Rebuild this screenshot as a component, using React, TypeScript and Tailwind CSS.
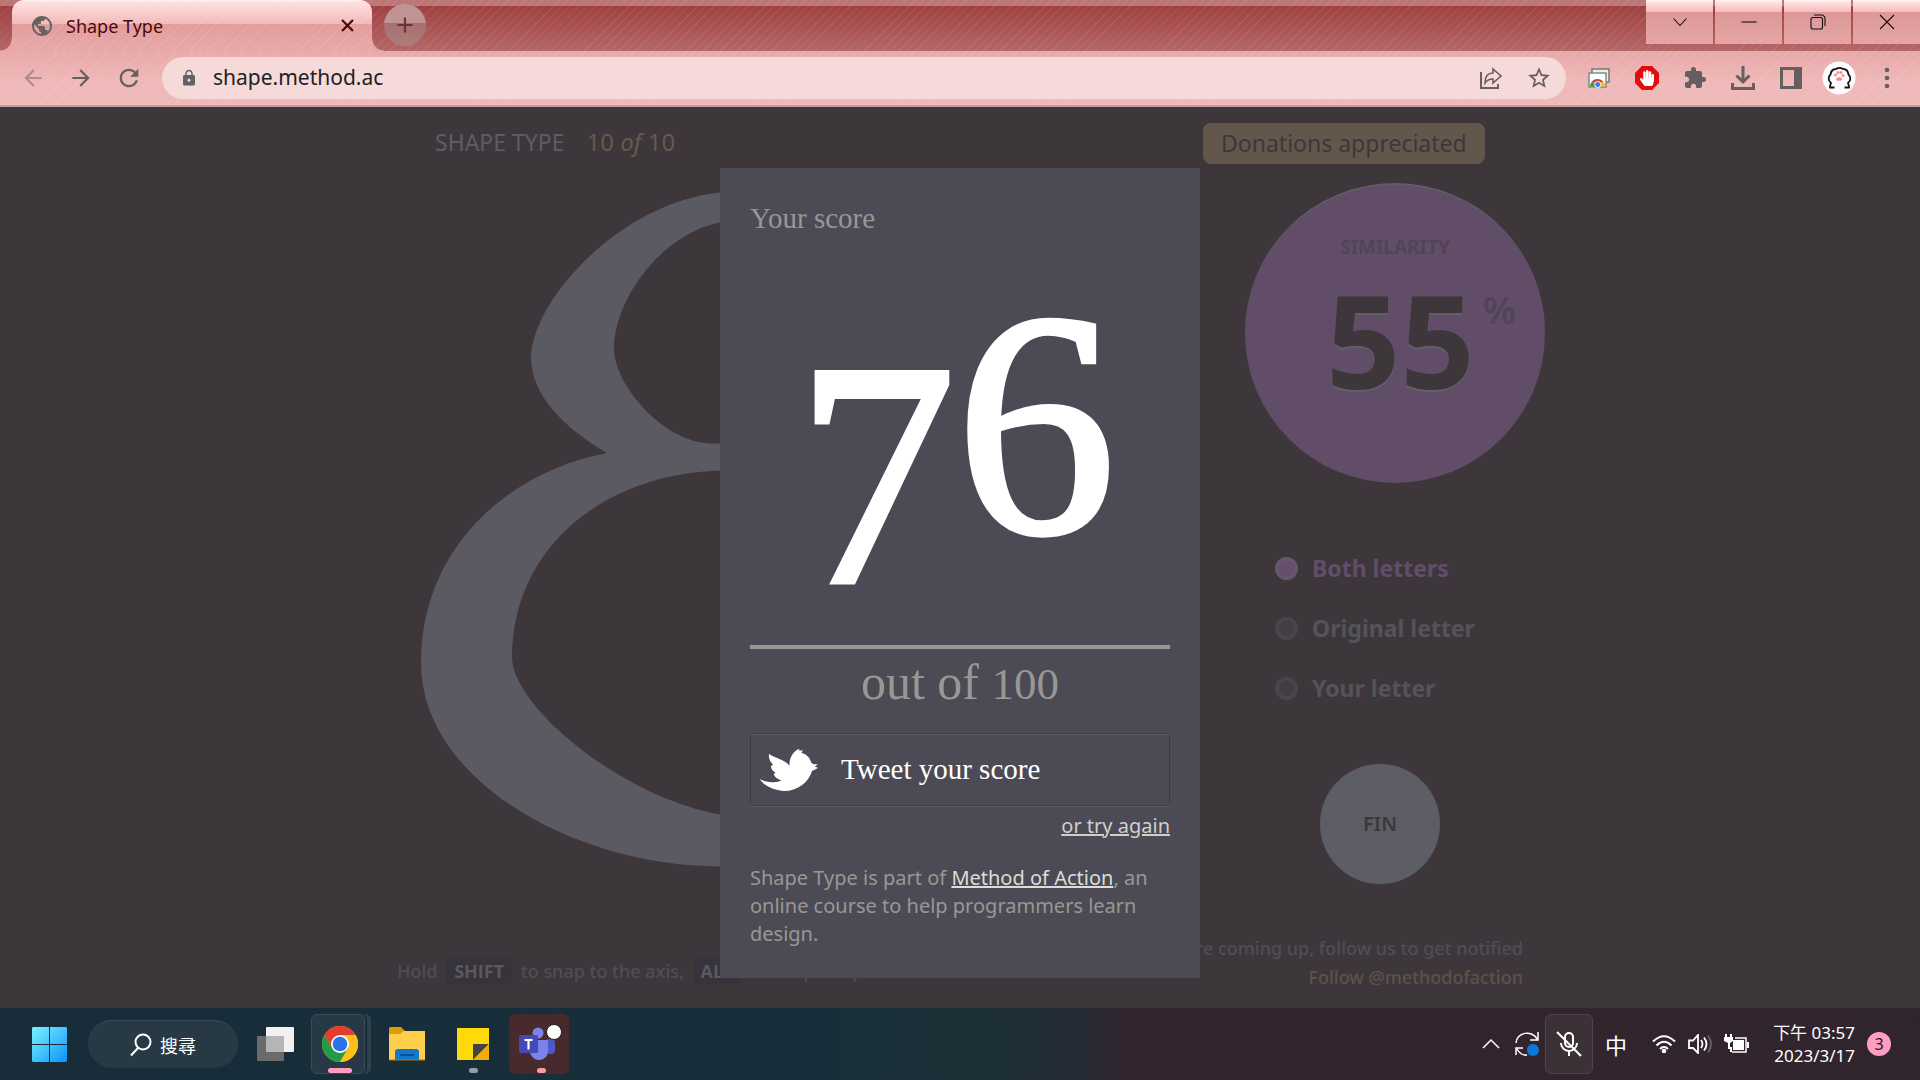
import React from "react";
import {
  MdArrowBack,
  MdArrowForward,
  MdRefresh,
  MdLock,
  MdPublic,
  MdExtension,
  MdStarBorder,
  MdAdd,
} from "react-icons/md";
import { FaHandPaper } from "react-icons/fa";

const stripes =
  "bg-[repeating-linear-gradient(135deg,transparent_0_5px,rgba(255,255,255,0.08)_5px_6px)]";

function WindowButton({ label, children }: { label: string; children: React.ReactNode }) {
  return (
    <button
      aria-label={label}
      className="flex h-11 w-[67px] items-center justify-center bg-[linear-gradient(#fff5f5_0,#ffdede_3px,#f4bcbc_12px,#dd9797_12px,#e6a5a5_100%)]"
    >
      <svg width="16" height="16" viewBox="0 0 16 16" fill="none" stroke="#111" strokeWidth="1.1">
        {children}
      </svg>
    </button>
  );
}

function TabStrip() {
  return (
    <div className="relative flex h-[51px] bg-[linear-gradient(#bd7676_0_6px,#9f4141_6px,#b56767_100%)]">
      <div className={`pointer-events-none absolute inset-0 ${stripes}`} />
      <div className="relative flex w-3 flex-col">
        <div className="mt-auto h-3 w-3 bg-[radial-gradient(circle_at_0_0,transparent_11px,#e6a7a7_12px)]" />
      </div>
      <div className="relative flex w-[360px] items-center rounded-t-xl bg-[linear-gradient(#fff0f0_0,#ffdede_3px,#f2b9b9_24px,#e29c9c_24px,#e8a9a9_100%)] pl-[18px] pr-[18px]">
        <div className={`pointer-events-none absolute inset-0 rounded-t-xl ${stripes}`} />
        <MdPublic className="size-6 text-[#66605f]" />
        <span className="ml-3 flex-1 text-lg text-[#4b0505]">Shape Type</span>
        <button aria-label="Close tab" className="text-[#4b0505]">
          <svg width="13" height="13" viewBox="0 0 13 13" fill="none" stroke="currentColor" strokeWidth="2.200">
            <path d="m1 1 11 11M12 1 1 12" />
          </svg>
        </button>
      </div>
      <div className="relative flex w-3 flex-col">
        <div className="mt-auto h-3 w-3 bg-[radial-gradient(circle_at_100%_0,transparent_11px,#e6a7a7_12px)]" />
      </div>
      <button
        aria-label="New tab"
        className="relative mt-1 flex size-[42px] items-center justify-center rounded-full bg-[linear-gradient(#bf9492_0_45%,#a96f6f_45%,#ac7d7b_100%)] text-[#6a3535]"
      >
        <MdAdd className="size-[26px]" />
      </button>
      <div className="relative ml-auto flex gap-0.5">
        <WindowButton label="Search tabs">
          <path d="M1.500 4.500 8 11.500l6.500-7" />
        </WindowButton>
        <WindowButton label="Minimize">
          <path d="M.5 8h15" />
        </WindowButton>
        <WindowButton label="Restore">
          <rect x="1" y="3.500" width="11.500" height="11.500" rx="2" />
          <path d="M4 1h7.500a3.500 3.500 0 0 1 3.500 3.500V12" />
        </WindowButton>
        <WindowButton label="Close">
          <path d="m1 1 14 14M15 1 1 15" />
        </WindowButton>
      </div>
    </div>
  );
}

function ToolButton({ label, children }: { label: string; children: React.ReactNode }) {
  return (
    <button aria-label={label} className="flex h-10 w-12 items-center justify-center text-[#665f5f]">
      {children}
    </button>
  );
}

function Toolbar() {
  return (
    <div className="relative flex h-14 items-center border-b-2 border-[#c79c9c] bg-[linear-gradient(#e8a9a9,#f0b9b9_60%)] px-[9px]">
      <div className={`pointer-events-none absolute inset-0 ${stripes}`} />
      <div className="relative flex w-full items-center">
        <ToolButton label="Back">
          <MdArrowBack className="size-[26px] text-[#b38a8a]" />
        </ToolButton>
        <ToolButton label="Forward">
          <MdArrowForward className="size-[26px]" />
        </ToolButton>
        <ToolButton label="Reload">
          <MdRefresh className="size-7" />
        </ToolButton>
        <div className="mx-[9px] flex h-[42px] flex-1 items-center rounded-full bg-[#f6dada] pl-[18px] pr-[3px]">
          <MdLock className="size-[18px] text-[#5f6368]" />
          <input
            aria-label="Address"
            defaultValue="shape.method.ac"
            className="ml-[15px] flex-1 bg-transparent text-[21px] text-[#202124] outline-none"
          />
          <ToolButton label="Share">
            <svg width="24" height="24" viewBox="0 0 24 24" fill="none" stroke="currentColor" strokeWidth="2">
              <path d="M2 6v16h17v-4" />
              <path d="M6 17c0-7 3-10 8-10V3l8 7-8 7v-4c-4 0-6 1-8 4z" strokeWidth="1.600" />
            </svg>
          </ToolButton>
          <ToolButton label="Bookmark">
            <MdStarBorder className="size-[26px]" />
          </ToolButton>
        </div>
        <ToolButton label="Tab cards">
          <svg width="24" height="24" viewBox="0 0 24 24">
            <rect x="5" y="3" width="17" height="13" fill="#eee" stroke="#777" strokeWidth="1.500" />
            <rect x="2" y="7" width="17" height="14" fill="#fff" stroke="#888" strokeWidth="1.500" />
            <path d="M3 20.500a7.500 7.500 0 0 1 2-5l6 5z" fill="#2aa14b" />
            <path d="M4.500 16a7.500 7.500 0 0 1 12 0l-6 1.500z" fill="#e2382c" />
            <path d="M16.500 15.500a8 8 0 0 1 1.700 5H11l-.5-3z" fill="#fbc21b" />
            <circle cx="10.700" cy="18.500" r="3" fill="#2e7cf0" stroke="#fff" />
          </svg>
        </ToolButton>
        <ToolButton label="Ad blocker">
          <span className="flex size-6 items-center justify-center bg-[#e30b0b] [clip-path:polygon(29%_0,71%_0,100%_29%,100%_71%,71%_100%,29%_100%,0_71%,0_29%)]">
            <FaHandPaper className="size-4 text-white" />
          </span>
        </ToolButton>
        <ToolButton label="Extensions">
          <MdExtension className="size-6" />
        </ToolButton>
        <ToolButton label="Downloads">
          <svg width="24" height="24" viewBox="0 0 24 24" fill="none" stroke="currentColor" strokeWidth="3">
            <path d="M12 0v15M5.500 9.500 12 16l6.500-6.500M1.500 17v5.500h21V17" />
          </svg>
        </ToolButton>
        <ToolButton label="Side panel">
          <svg width="22" height="22" viewBox="0 0 22 22" fill="none" stroke="currentColor" strokeWidth="3">
            <path d="M1.500 1.500h19v19h-19z" />
            <path d="M14 1h7v20h-7z" fill="currentColor" stroke="none" />
          </svg>
        </ToolButton>
        <ToolButton label="Profile">
          <svg width="34" height="34" viewBox="0 0 34 34">
            <circle cx="17" cy="17" r="16.500" fill="#fdfbfb" />
            <path
              d="M12.500 26.500H8c-.5-2 .8-3 1-4.500-3-2.500-3-6-.5-8.500.5-3.500 2.500-5.500 5.500-5.500 2-1.300 5-1.300 7 0 3 0 5 2 5.500 5.500 2.500 2.500 2.500 6-.5 8.500.2 1.500 1.500 2.500 1 4.500H22.500"
              fill="none"
              stroke="#151515"
              strokeWidth="1.800"
            />
            <g fill="#f29090">
              <circle cx="13.500" cy="14" r="1.500" />
              <circle cx="16" cy="11.500" r="1.500" />
              <circle cx="19" cy="11.500" r="1.500" />
              <circle cx="21" cy="14.500" r="1.500" />
              <path d="M14 19c0-2 2-3 3.200-3s3 1 3 3c-1 1-5.200 1-6.200 0z" />
            </g>
          </svg>
        </ToolButton>
        <ToolButton label="Menu">
          <svg width="6" height="22" viewBox="0 0 6 22" fill="currentColor">
            <circle cx="3" cy="3" r="2.300" />
            <circle cx="3" cy="11" r="2.300" />
            <circle cx="3" cy="19" r="2.300" />
          </svg>
        </ToolButton>
      </div>
    </div>
  );
}

function Key({ children }: { children: React.ReactNode }) {
  return (
    <kbd className="mx-1 rounded-md bg-[#36333a] px-2 py-0.5 font-['Open_Sans',sans-serif] font-bold text-[#5a5860]">
      {children}
    </kbd>
  );
}

function LetterOption({ label, checked = false }: { label: string; checked?: boolean }) {
  return (
    <label
      className={
        checked
          ? "flex h-[60px] items-center gap-[14px] text-[#624d6b]"
          : "flex h-[60px] items-center gap-[14px] text-[#55535a]"
      }
    >
      <input
        type="radio"
        name="letter"
        defaultChecked={checked}
        className="size-[23px] appearance-none rounded-full border-4 border-[#48464b] bg-[#433d43] checked:border-[#65566f] checked:bg-[#654d6b]"
      />
      {label}
    </label>
  );
}

function Stage() {
  return (
    <div className="mx-auto flex w-full max-w-[1126px] flex-1 flex-col pb-4 pt-4">
      <div className="flex flex-1 justify-between">
        <div>
          <header className="flex h-10 items-center gap-[22px] pb-0.5 pl-[38px] text-[23px]">
            <h1 className="text-[#5c5c66]">SHAPE TYPE</h1>
            <span className="text-2xl text-[#665a4b]">
              10 <em>of</em> 10
            </span>
          </header>
          <svg
            className="ml-6 mt-[29px]"
            width="360"
            height="675"
            viewBox="421 191.500 360 675"
            fill="#5b5961"
            fillRule="evenodd"
            aria-label="Numeral eight"
          >
            <path d="M781 197Q750 192 720 192C620 202 532 300 531 357C531 395 565 428 607 452.500C505 472 421 550 421 662C421 780 575 866 720 866H781V816Q750 820 720 814C620 796 512 705 512 657C512 550 600 474 720 470H781V443H712C665 443 614 385 614 348C614 300 660 234 720 222Q750 218 781 224Z" />
          </svg>
        </div>
        <aside className="w-[320px]">
          <a
            href="#donate"
            className="inline-flex h-[41px] items-center rounded-lg bg-[#62574a] px-[18px] pb-0.5 text-[23px] leading-8 text-[#3d373c]"
          >
            Donations appreciated
          </a>
          <div className="ml-[42px] mt-[19px] flex size-[300px] flex-col items-center rounded-full border-t-2 border-[#5f5d68] bg-[#624d68] pt-[48px] font-bold text-[#524458]">
            <div className="text-[19px] leading-7">SIMILARITY</div>
            <div className="mt-[18px] flex items-start gap-2 pl-[52px] leading-[120px]">
              <span className="text-[130px] text-[#3d373c] [text-shadow:0_2px_1px_#61606a]">55</span>
              <span className="pt-1 text-[38px] font-semibold leading-[52px]">%</span>
            </div>
          </div>
          <div className="ml-[72px] mt-[55px] text-[23px] font-bold">
            <LetterOption label="Both letters" checked />
            <LetterOption label="Original letter" />
            <LetterOption label="Your letter" />
          </div>
          <button className="ml-[117px] mt-[46px] size-[120px] rounded-full bg-[#5d5d65] text-[20px] font-semibold text-[#3d373c]">
            FIN
          </button>
        </aside>
      </div>
      <footer className="flex items-end justify-between text-lg font-medium text-[#504d54]">
        <p className="whitespace-nowrap pb-[7px]">
          Hold <Key>SHIFT</Key> to snap to the axis, <Key>ALT</Key> to snap the path
        </p>
        <p className="whitespace-nowrap text-right leading-[29px]">
          There are more coming up, follow us to get notified
          <br />
          <a href="#follow" className="text-[#5d5248]">
            Follow @methodofaction
          </a>
        </p>
      </footer>
    </div>
  );
}

function ScoreDialog() {
  return (
    <div className="absolute inset-0 flex items-end justify-center pb-[30px]">
      <section
        role="dialog"
        aria-label="Your score"
        className="flex w-[480px] flex-col bg-[#4c4b55] p-[30px] text-[#999794]"
      >
        <h2 className="font-['Liberation_Serif',serif] text-[29px] leading-10">Your score</h2>
        <div className="flex h-[411px] items-start justify-center border-b-4 border-[#999794] pr-2 pt-[60px] font-['Liberation_Serif',serif] text-[320px] leading-[252px] text-white [-webkit-text-stroke:5px_white]">
          <span className="pt-[50px]">7</span>
          <span>6</span>
        </div>
        <p className="text-center font-['Liberation_Serif',serif] text-[50px] leading-[66px]">
          out of <span className="text-[45px]">100</span>
        </p>
        <a
          href="#tweet"
          className="mt-4 flex h-[73px] items-center gap-[22px] rounded border border-[#3d3c45] pl-2 font-['Liberation_Serif',serif] text-[29px] text-white shadow-[0_1px_0_#5c5b66,inset_0_1px_0_#5c5b66]"
        >
          <svg width="60" height="44" viewBox="116 414 180 132" fill="white">
            <path d="M118 508C145 518 170 520 184 511C170 508 163 500 160 492L166 488C156 483 152 475 152 467L159 465C149 455 144 444 146 432C168 446 196 450 207 467C207 440 222 420 238 417L236 422L248 421L243 428C260 432 270 446 274 460C281 464 286 463 292 461C289 466 286 468 283 470L293 473C288 477 281 479 275 483C264 520 228 544 190 543C155 540 130 525 118 508Z" />
          </svg>
          Tweet your score
        </a>
        <a href="#again" className="mt-1 self-end text-xl leading-8 text-[#d0cfcc] underline">
          or try again
        </a>
        <p className="mt-[22px] text-xl leading-7">
          Shape Type is part of{" "}
          <a href="#method" className="text-[#dddcd8] underline">
            Method of Action
          </a>
          , an online course to help programmers learn design.
        </p>
      </section>
    </div>
  );
}

function ChromeLogo() {
  return (
    <svg width="36" height="36" viewBox="0 0 36 36">
      <circle cx="18" cy="18" r="18" fill="#fbc11a" />
      <path d="M2.400 9A18 18 0 0 1 33.600 9H18l-8 13.500z" fill="#e33b2e" />
      <path d="M2.400 9A18 18 0 0 0 18 36l7.800-13.500H10.200z" fill="#259b45" />
      <path d="M18 36A18 18 0 0 0 33.600 9H18l8 13.500z" fill="#fbc11a" />
      <circle cx="18" cy="18" r="9" fill="#fff" />
      <circle cx="18" cy="18" r="7.300" fill="#2a73e8" />
    </svg>
  );
}

function Taskbar() {
  return (
    <nav className="flex h-[72px] items-center bg-[linear-gradient(90deg,#182c39_0%,#172f3b_42%,#1d2f36_52%,#232a33_56%,#33242d_59%,#31252d_100%)] pl-8 pr-[29px] text-white">
      <button aria-label="Start">
        <svg width="35" height="35" viewBox="0 0 35 35">
          <defs>
            <linearGradient id="win" x1="0" y1="0" x2="1" y2="1" gradientUnits="objectBoundingBox">
              <stop offset="0" stopColor="#7cf3ff" />
              <stop offset="1" stopColor="#0a94fb" />
            </linearGradient>
          </defs>
          <path d="M0 1 1 0h16v17H0zM18 0h16l1 1v16H18zM0 18h17v17H1l-1-1zM18 18h17v16l-1 1H18z" fill="url(#win)" />
        </svg>
      </button>
      <button className="ml-[21px] flex h-12 w-[150px] items-center justify-center gap-2 rounded-full border-t border-[#3a4c57] bg-[#273945] font-['Noto_Sans_CJK_TC',sans-serif] text-lg">
        <svg width="22" height="24" viewBox="0 0 22 24" fill="none" stroke="#fff" strokeWidth="2">
          <circle cx="13" cy="9" r="7.500" />
          <path d="M8 15 1 22.500" />
        </svg>
        搜尋
      </button>
      <button aria-label="Task view" className="ml-[19px]">
        <svg width="37" height="35" viewBox="0 0 37 35">
          <rect y="9" width="27" height="25" rx="1" fill="#6b6b6b" />
          <rect x="9" width="28" height="25" rx="1" fill="#f1f1f1" />
          <rect x="9" y="9" width="18" height="16" fill="#b5b5b5" />
        </svg>
      </button>
      <button
        aria-label="Chrome"
        className="ml-[17px] flex h-[60px] w-[54px] flex-col items-center rounded-md border border-[#3b4c57] bg-[#273945] pl-[3px] pt-[11px] shadow-[2px_0_0_#182c39,6px_0_0_#2f404b]"
      >
        <ChromeLogo />
        <span className="mt-[6px] h-[5px] w-6 rounded-full bg-[#ff9dc0]" />
      </button>
      <button aria-label="File explorer" className="ml-6">
        <svg width="36" height="34" viewBox="0 0 36 34">
          <path d="M0 1.500Q0 0 1.500 0H12l4 4h20v8H0z" fill="#e09a05" />
          <path d="M0 7h11l4-3h21v29H0z" fill="#ffcf4b" />
          <path d="M6 33V25q0-3 3-3h18q3 0 3 3v8z" fill="#1177cf" />
          <path d="M11 28h14" stroke="#0a4f92" strokeWidth="2" />
          <path d="M0 33h36" stroke="#b87b00" />
        </svg>
      </button>
      <button aria-label="Sticky notes" className="ml-8 flex flex-col items-center pt-[13px]">
        <svg width="32" height="32" viewBox="0 0 32 32">
          <path d="M0 0h32v32H0z" fill="#ffd90a" />
          <path d="M16 16h16L16 32z" fill="#434343" />
          <path d="M32 16v16H16z" fill="#efae0a" />
        </svg>
        <span className="mt-2 h-[5px] w-[9px] rounded-full bg-[#93a0a8]" />
      </button>
      <button
        aria-label="Teams"
        className="ml-5 flex h-[60px] w-[60px] flex-col items-center rounded-md bg-[#482a2c] pl-1 pt-2"
      >
        <svg width="44" height="38" viewBox="0 0 44 38">
          <circle cx="19" cy="11" r="5.500" fill="#7b83eb" />
          <rect x="26" y="17" width="10" height="15" rx="4" fill="#4f58cb" />
          <path d="M11 18h18v10a9 9 0 0 1-18 2z" fill="#7b83eb" />
          <rect y="13" width="19" height="18" rx="1.500" fill="#4549b5" />
          <path d="M5.500 18h8M9.500 18v9.500" stroke="#fff" strokeWidth="2.200" />
          <circle cx="35" cy="10" r="7.500" fill="#fff" stroke="#2b2023" />
        </svg>
        <span className="mt-2 h-[5px] w-[9px] shrink-0 rounded-full bg-[#ff9b9b]" />
      </button>

      <div className="ml-auto flex items-center">
        <button aria-label="Show hidden icons">
          <svg width="18" height="12" viewBox="0 0 18 12" fill="none" stroke="#fff" strokeWidth="1.500">
            <path d="m1 10 8-8 8 8" />
          </svg>
        </button>
        <svg className="ml-[15px]" width="25" height="26" viewBox="0 0 25 26" fill="none" stroke="#fff" strokeWidth="1.500">
          <path d="M1 12A11 10 0 0 1 22 8M23 1v8h-8M1 24v-7h7M2 18q4 7 10 6" />
          <circle cx="18" cy="19" r="6" fill="#0a78dc" stroke="none" />
        </svg>
        <button
          aria-label="Microphone muted"
          className="ml-[5px] flex h-[60px] w-12 items-center justify-center rounded-md border border-[#4f444b] bg-[#3d3138]"
        >
          <svg width="26" height="26" viewBox="0 0 26 26" fill="none" stroke="#fff" strokeWidth="2">
            <rect x="9" y="2" width="8" height="14" rx="4" />
            <path d="M5 12a8 8 0 0 0 16 0M13 20v5M1 1l24 24" />
          </svg>
        </button>
        <button className="ml-3 font-['Noto_Sans_CJK_TC',sans-serif] text-[22px] leading-7">中</button>
        <svg className="ml-[25px]" width="24" height="20" viewBox="0 0 24 20" fill="none" stroke="#fff" strokeWidth="2">
          <path d="M1 7.500Q12-3 23 7.500M4.500 11.500Q12 4 19.500 11.500M8 15Q12 11 16 15" />
          <circle cx="12" cy="17" r="2.300" fill="#fff" stroke="none" />
        </svg>
        <svg className="ml-3" width="25" height="20" viewBox="0 0 25 20" fill="none" stroke="#fff" strokeWidth="1.800">
          <path d="M1 6.500h4L10 1v18l-5-5H1z" />
          <path d="M13 6q3 4 0 8M16 3.500q5 6.500 0 13" />
          <path d="M20 1.500q6 8.500 0 17" stroke="#6a5d64" />
        </svg>
        <svg className="ml-[11px]" width="25" height="20" viewBox="0 0 25 20" fill="#fff">
          <path d="M1 0h2v3h3V0h2v3h1v4L6 9v4h2v5H6V15H4V9L0 7V3h1z" />
          <path d="M9 6h11v10H9z" />
          <path d="M11 4h11v14H8" fill="none" stroke="#fff" strokeWidth="1.500" />
          <path d="M23 8h2v6h-2z" />
        </svg>
        <time className="ml-6 text-right font-['Noto_Sans','Noto_Sans_CJK_TC',sans-serif] text-[17px] leading-[23px]">
          下午 03:57
          <br />
          2023/3/17
        </time>
        <span className="ml-3 flex size-6 items-center justify-center rounded-full bg-[#ff9dc0] text-base text-[#22181c]">
          3
        </span>
      </div>
    </nav>
  );
}

export default function App() {
  return (
    <div className="flex min-h-screen flex-col bg-[#3d373c] font-['Noto_Sans',sans-serif]">
      <TabStrip />
      <Toolbar />
      <main className="relative flex flex-1 flex-col">
        <Stage />
        <ScoreDialog />
      </main>
      <Taskbar />
    </div>
  );
}
